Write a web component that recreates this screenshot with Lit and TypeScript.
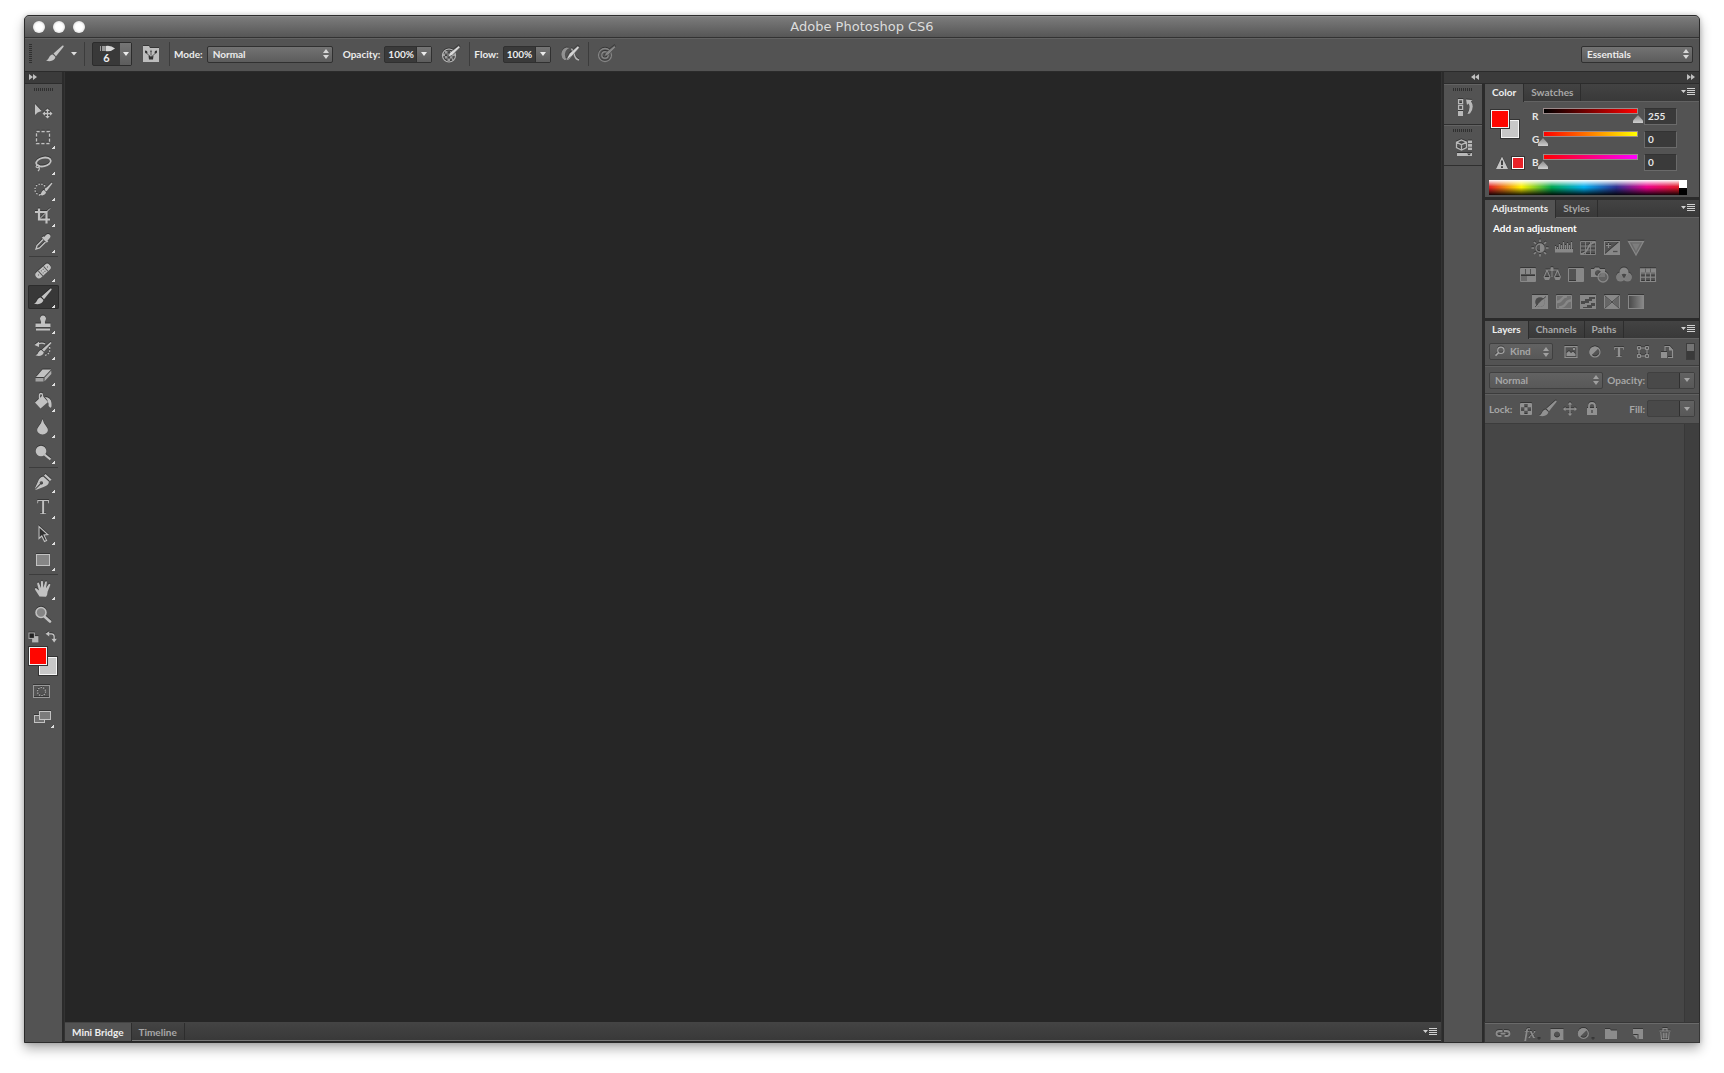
import { LitElement, html, css, svg, nothing, TemplateResult } from "lit";
import { customElement, state } from "lit/decorators.js";

type Shape = ReturnType<typeof svg>;

const brushShape = svg`<path fill="currentColor" d="M17.5 1.5 L8.5 9.6 L11 12.2 L18.6 2.8 Q18.9 1 17.5 1.5Z"/><path fill="currentColor" d="M7.8 10.4 L10.4 13 C9.8 17 5 18 1 16.4 C4.6 15.6 3.6 10.6 7.8 10.4Z"/>`;
const smallBrush = svg`<path fill="currentColor" d="M18.6 2.6 L11.6 9.4 L13.6 11.2 L19.4 3.6Z M11 10 L13 12 C12.4 15.4 9 15.8 6.4 14.6 C9 14 8 10.6 11 10Z"/>`;
const crossArrows = (x: number, y: number, r: number) => svg`<path stroke="currentColor" stroke-width="1.3" fill="none" d="M${x - r + 1} ${y}H${x + r - 1}M${x} ${y - r + 1}V${y + r - 1}"/><path fill="currentColor" d="M${x - r} ${y}l2.5-2.3v4.6zM${x + r} ${y}l-2.5-2.3v4.6zM${x} ${y - r}l-2.3 2.5h4.6zM${x} ${y + r}l-2.3-2.5h4.6z"/>`;

const icons: Record<string, Shape> = {
  move: svg`<path fill="currentColor" d="M2 2V13L4.6 10.5 L8.6 9Z"/>${crossArrows(14.5, 11.5, 5)}`,
  marquee: svg`<rect x="3.5" y="3.5" width="13" height="12" fill="none" stroke="currentColor" stroke-width="1.3" stroke-dasharray="3.2 1.8"/>`,
  lasso: svg`<ellipse cx="10.5" cy="8" rx="7.4" ry="4.3" transform="rotate(-12 10.5 8)" fill="none" stroke="currentColor" stroke-width="1.8"/><path fill="none" stroke="currentColor" stroke-width="1.2" d="M5 11c-2.4 0-2.6 3 0 2.6s1.6-2.7 0-2.6M5.5 13.5q2 1-.5 3.5"/>`,
  quick: svg`<circle cx="7.5" cy="9.5" r="5.5" fill="none" stroke="currentColor" stroke-width="1.3" stroke-dasharray="1.4 1.5"/>${smallBrush}`,
  crop: svg`<path fill="none" stroke="currentColor" stroke-width="2.2" d="M6 2.5V13.5H17M2 6H13.5V17.5"/><path stroke="currentColor" d="M6.5 13L17 2.5"/>`,
  eyedropper: svg`<path fill="currentColor" d="M12.5 3.5q2.5-2.5 4.3-.8t-.8 4.3l-1.5 1.5.8.8-1.5 1.5-5-5 1.5-1.5.8.8z"/><path fill="none" stroke="currentColor" stroke-width="1.4" d="M10 7.5L4 13.5L3 17L6.5 16L12.5 10"/>`,
  heal: svg`<g transform="rotate(-42 10 10)"><rect x="1" y="6.6" width="18" height="7" rx="3.3" fill="currentColor"/><path stroke="#555" d="M6.5 7V13.5M13.5 7V13.5"/><path fill="#555" d="M8.3 8.3h1v1h-1zM10.8 8.3h1v1h-1zM8.3 11h1v1h-1zM10.8 11h1v1h-1zM3.5 9.5h1v1h-1zM15.5 9.5h1v1h-1z"/></g>`,
  brush: brushShape,
  stamp: svg`<path fill="currentColor" d="M10 2.5a3 3 0 0 1 2.7 4.3q-1.2 1.700-.7 3.700h5.500v3.500H2.500v-3.500h5.500q.5-2-.7-3.700A3 3 0 0 1 10 2.500zM3 15.500h14v2H3z"/>`,
  history: svg`<path fill="none" stroke="currentColor" stroke-width="1.4" d="M4 5.5Q9 3 12 5"/><path fill="currentColor" d="M1.5 6l4.500-3.500v5.500zM17.500 3L9 10.500l2 2L18.500 4zM8.300 11l2.500 2.300C10 17 6 17.500 2.500 16.300 5.500 15.500 5 11.500 8.300 11z"/><path fill="none" stroke="currentColor" stroke-width="1.3" stroke-dasharray="1.5 1.5" d="M16.5 8q1.5 7-5 8.5"/>`,
  eraser: svg`<path fill="currentColor" d="M9.5 4.5H18L11 12H3z"/><path fill="currentColor" opacity=".75" d="M2.5 13H10.5V16.5H2.5z"/><path fill="currentColor" opacity=".85" d="M11.5 12.7L18.3 5.5V9L11.5 16.3z"/>`,
  bucket: svg`<path fill="currentColor" d="M9.5 4.5L15 11L7.5 17.5L2 11.5z"/><path fill="none" stroke="currentColor" stroke-width="1.3" d="M6.5 9V4.2q0-1.7 1.5-1.7T9.5 4.2V8"/><path fill="currentColor" d="M12 6q6 .5 6.500 6t-1.500 4.500-1.500-4Q15 9 12 6z"/>`,
  blur: svg`<path fill="currentColor" d="M9.5 2Q10.5 6.5 13.7 10Q16 13 13.9 15.6Q12 17.6 9.5 17.6T5.1 15.6Q3 13 5.3 10Q8.5 6.5 9.5 2z"/>`,
  dodge: svg`<circle cx="8" cy="8" r="5.3" fill="currentColor"/><path stroke="currentColor" stroke-width="2.2" d="M11.5 11.5L17.5 16.5"/>`,
  pen: svg`<path fill="currentColor" fill-rule="evenodd" d="M12.5 2L18.5 7.5L17 9L11 3.5zM10.3 4.5L16 9.8Q15.5 13.5 10.5 15L4 17.5L2 18L7.8 12.3a1.6 1.6 0 1 0-.8-.8L1.8 17L2.5 15L5.2 9Q6.5 5 10.3 4.5z"/>`,
  type: svg`<text x="10" y="16" text-anchor="middle" font-family="Liberation Serif, serif" font-weight="400" font-size="20" fill="currentColor">T</text>`,
  path: svg`<path fill="#303030" stroke="currentColor" stroke-width="1.1" d="M6 2.5V14.5L8.8 12L11.5 17.5L13.6 16.5L11 11L14.8 10.6z"/>`,
  rect: svg`<rect x="3.5" y="4.5" width="13" height="11" fill="#868686" stroke="currentColor"/>`,
  hand: svg`<path fill="currentColor" d="M6.5 17.5L2 10.5Q1.5 9 3 9L6 11.5L4.2 5Q4 3.8 5 3.6T6.2 4.5L8 9L8 2.8Q8.1 1.8 9 1.8T9.9 2.8L10.4 8.8L12.1 3Q12.4 2.2 13.2 2.3T13.9 3.4L13 9.3L15.6 5.3Q16.2 4.6 16.9 5T17.2 6.2L14.7 12.5Q14.5 16 13 17.8z"/>`,
  zoom: svg`<circle cx="8" cy="7.5" r="5" fill="#858585" stroke="currentColor" stroke-width="1.6"/><path stroke="currentColor" stroke-width="2.6" stroke-linecap="round" d="M12 12L17 16.5"/>`,
  mask: svg`<rect x="1.5" y="4.5" width="16" height="12" fill="none" stroke="#999"/><circle cx="9.5" cy="10.5" r="4" fill="none" stroke="#b4b4b4" stroke-width="1.2" stroke-dasharray="1.2 1.3"/>`,
  screen: svg`<rect x="2.5" y="8.5" width="10" height="7" fill="#707070" stroke="currentColor"/><rect x="7.5" y="4.5" width="11" height="8" fill="#7a7a7a" stroke="currentColor"/>`,
  reset: svg`<rect x="9" y="9" width="7" height="7" fill="#b5b5b5"/><rect x="5.5" y="5.5" width="6" height="6" fill="#222" stroke="#bbb"/>`,
  swap: svg`<path fill="none" stroke="currentColor" stroke-width="1.5" d="M7 6.5h3.5q3 0 3 3v3"/><path fill="currentColor" d="M4 6.5l4-3v6zM13.5 16l-3-4h6z"/>`,
  folder: svg`<path fill="#bdbdbd" d="M2 2h6l1 2h9V18H2z"/><path fill="none" stroke="#3a3a3a" stroke-width=".8" d="M8 11.5L5.500 9M10 11V8M12 11.500L14.500 9"/><path fill="#333" d="M4 6.500l2 .5.500 2-1.500.500-1-1zM9.200 8l.8-2.500.8 2.500zM16 6.500l-2 .5-.5 2 1.500.500 1-1zM7.500 11.500h1.500v1h.7v-1h.8v1h.8v-1h1.200L12 15.500H8z"/>`,
  opacityPen: svg`<circle cx="8" cy="11.5" r="6.5" fill="none" stroke="currentColor" stroke-width="1.2"/><path fill="currentColor" opacity=".8" d="M4 7h2.5v2.5H4zM9 7h2v2.5H9zM6.5 9.5H9V12H6.5zM2 9.5h2V12H2zM11 9.5h3V12h-3zM4 12h2.5v2.5H4zM9 12h2.5v2.5H9zM6.5 14.5H9V17H6.5zM11 14.5h1.5V16H11z"/><path fill="#dadada" stroke="#444" stroke-width=".6" d="M18 1.5L8.5 9L7 13L11 11.5L19 3.5z"/>`,
  airbrush: svg`<path fill="currentColor" opacity=".7" d="M6.5 3.500A7 7 0 0 0 4.500 16H7.500A7 7 0 0 1 9.500 4z"/><path fill="none" stroke="currentColor" stroke-width="1.500" d="M11.500 4.500L14 9.500Q15 15 19 16M6.500 15.500Q11 14 12.500 8"/><path fill="#d4d4d4" stroke="#444" stroke-width=".5" d="M18 1.800L9.500 9.500L6 16L12 12L19.300 3.800z"/>`,
  target: svg`<circle cx="8" cy="11" r="6.5" fill="none" stroke="currentColor" stroke-width="1.3"/><circle cx="8" cy="11" r="3.2" fill="none" stroke="currentColor" stroke-width="1.4"/><path fill="currentColor" stroke="#4b4b4b" stroke-width=".6" d="M17.5 1.5L9 8.5L7 12.5L11 11L18.5 3.5z"/>`,
  historyPanel: svg`<path fill="none" stroke="currentColor" stroke-width="1.3" d="M3.6 2.6h4v4h-4zM3.6 8.4h4v4h-4z"/><path fill="currentColor" d="M3 14h5v5H3zM11 2.5l6.5.5-1.5 1.3Q20 10 15 16.5l-2.5.5Q16 10 13.5 6.5L12 8z"/>`,
  propsPanel: svg`<path fill="none" stroke="currentColor" stroke-width="1.3" d="M6.5 2l5 2.2v5.3L6.5 12 1.5 9.5V4.2zM1.5 4.2l5 2.500 5-2.500M6.500 6.700V12"/><path fill="currentColor" d="M13 2.5h4v2.7h-4zM13 6h4v2.7h-4zM13 9.5h4V12h-4zM2 15h15v3H2z"/><path fill="#333" d="M12 15.5h4l-2 2z"/>`,
  warning: svg`<path fill="#c4c4c4" d="M10 3.5L16 16H4z"/><path stroke="#333" stroke-width="1.8" d="M10 7.5V12M10 13.2V15"/>`,
  sun: svg`<circle cx="10" cy="10" r="4" fill="none" stroke="currentColor" stroke-width="1.3"/><path fill="currentColor" d="M10 6a4 4 0 0 1 0 8z"/><path stroke="currentColor" stroke-width="1.6" d="M10 1.5V4M10 16v2.5M1.5 10H4M16 10h2.5M4 4l1.8 1.8M14.2 14.2L16 16M4 16l1.8-1.8M14.2 5.8L16 4"/>`,
  levels: svg`<path fill="currentColor" d="M1 11h18v3.5H1z"/><path stroke="currentColor" stroke-width="1.2" d="M1.5 8v4M3.5 9v3M5.5 6v6M7.5 7v5M9.5 4v8M11.5 7v5M13.5 5v7M15.5 7v5M17.5 4v8"/>`,
  curves: svg`<path fill="none" stroke="currentColor" stroke-width=".9" d="M2.5 3.5h15v13h-15zM7.5 3.5v13M12.5 3.5v13M2.5 8h15M2.5 12h15"/><path fill="none" stroke="currentColor" stroke-width="1.8" d="M3 16Q8 15 10 10T17 4"/>`,
  exposure: svg`<rect x="2.5" y="3.5" width="15" height="13" fill="none" stroke="currentColor"/><path fill="currentColor" d="M17 4V16H3z"/><path stroke="currentColor" stroke-width="1.2" d="M4 7.5h5M6.5 5v5"/><path stroke="#505050" stroke-width="1.3" d="M11 13.5h4.5"/>`,
  vibrance: svg`<path fill="#6b6b6b" stroke="currentColor" stroke-width="1.3" d="M2.5 3.5h15L10 17z"/><path fill="currentColor" opacity=".6" d="M6 5.5h8L10 13z"/>`,
  hue: svg`<path fill="none" stroke="currentColor" d="M2.5 3.5h15v13h-15z"/><path fill="currentColor" d="M3 4h4v5H3zM8 4h4v5H8zM13 4h4v5h-4zM9 11h8v5H9z"/><path fill="#6b6b6b" d="M3 11h6v5H3z"/>`,
  balance: svg`<path fill="none" stroke="currentColor" stroke-width="1.2" d="M10 2v10M3.5 5h13M5 5L2 12M5 5l3 7M15.5 5l-3 7M15.5 5l3 7"/><path fill="currentColor" d="M8.5 2.5h3V6h-3zM1.5 12h7l-1.5 3H3zM12 12h7l-1.5 3H13.5z"/>`,
  bw: svg`<path fill="none" stroke="currentColor" d="M2.5 3.5h15v13h-15z"/><path fill="currentColor" d="M10 4h7v12h-7z"/>`,
  photo: svg`<path fill="currentColor" fill-rule="evenodd" d="M1 4h3l1-1.5h4L10 4h5v8H1zM8 5a3 3 0 1 0 .01 0z"/><circle cx="13" cy="12" r="5" fill="#707070" fill-opacity=".7" stroke="currentColor" stroke-width="1.3"/>`,
  mixer: svg`<circle cx="10" cy="7" r="4.5" fill="currentColor"/><circle cx="6.5" cy="12" r="4.5" fill="currentColor" opacity=".85"/><circle cx="13.5" cy="12" r="4.5" fill="currentColor" opacity=".85"/><path fill="#484848" d="M10 13.5L7.5 9.5q2.5-1.5 5 0z"/>`,
  lookup: svg`<path fill="currentColor" d="M2 3.5h16v4H2z"/><path fill="none" stroke="currentColor" stroke-width="1.2" d="M2.5 4h15v12.5h-15zM7.5 7v9.5M12.5 7v9.5M2.5 8h15M2.5 12.2h15"/><path stroke="#555" stroke-width=".8" d="M7.5 3.5v4M12.5 3.5v4"/>`,
  invert: svg`<rect x="2" y="3" width="16" height="14" fill="currentColor"/><circle cx="10" cy="10" r="4.8" fill="#4a4a4a"/><path fill="currentColor" d="M6.5 13.5L13.5 6.5A4.5 4.5 0 0 1 6.5 13.5z"/><path stroke="#4a4a4a" d="M5 15L8 12M12.5 7.5L16 4.5"/>`,
  poster: svg`<path fill="#707070" stroke="currentColor" d="M2.5 3.5h15v13h-15z"/><path fill="none" stroke="currentColor" stroke-width="2.5" d="M3 10Q6 10 8 7T13 4.5M5 15.5Q10 15 12 11.5T17.5 8.5"/>`,
  threshold: svg`<path fill="currentColor" d="M2 3h16v14H2z"/><path fill="#4a4a4a" d="M3 9h4V7h4V5h6v2h-3v2h-3v2H7v1H3zM5 15h4v-2h4v-2h4v3h-3v2H5z"/>`,
  selective: svg`<path fill="currentColor" d="M2 3h16v14H2z"/><path fill="#666" d="M3 4.5L9 10L3 15.5zM17 4.5L11 10L17 15.5z"/><path stroke="#4a4a4a" d="M2.5 3.5L17.5 16.5M2.5 16.5L17.5 3.5"/>`,
  gradient: svg`<defs><linearGradient id="gm"><stop offset="0" stop-color="#484848"/><stop offset="1" stop-color="#8a8a8a"/></linearGradient></defs><rect x="2.5" y="3.5" width="15" height="13" fill="url(#gm)" stroke="currentColor"/>`,
  image: svg`<path fill="none" stroke="currentColor" stroke-width="1.2" d="M4 4.6h12v10.800H4z"/><path fill="currentColor" d="M5.5 14v-3l2.5-2 2 2 2-1.5 2.5 2.5v2zM12 6h2v2h-2z"/>`,
  half: svg`<circle cx="10" cy="10" r="5" fill="none" stroke="currentColor" stroke-width="1.2"/><path fill="currentColor" d="M6 13.8A5.5 5.5 0 0 1 13.8 6z"/>`,
  filterType: svg`<text x="10" y="15" text-anchor="middle" font-family="Liberation Serif, serif" font-weight="700" font-size="15" fill="currentColor">T</text>`,
  shape: svg`<path fill="none" stroke="currentColor" stroke-width="1.2" d="M6 6h8v8H6z"/><path fill="#555" stroke="currentColor" d="M4.5 4.5h3v3h-3zM12.5 4.5h3v3h-3zM4.5 12.5h3v3h-3zM12.5 12.5h3v3h-3z"/>`,
  smart: svg`<path fill="none" stroke="currentColor" stroke-width="1.2" d="M8 9V4.5h4.5L15.5 8v7.5H11"/><path fill="currentColor" d="M12 4v4.5h4zM4 10h6v6H4z"/>`,
  search: svg`<circle cx="11" cy="8" r="3.5" fill="none" stroke="currentColor" stroke-width="1.3"/><path stroke="currentColor" stroke-width="1.8" d="M8.5 10.5L5 14"/>`,
  checker: svg`<path fill="none" stroke="currentColor" d="M4.5 4.5h11v11h-11z"/><path fill="currentColor" d="M5 5h3.3v3.3H5zM11.6 5H15v3.3h-3.4zM8.3 8.3h3.3v3.4H8.3zM5 11.7h3.3V15H5zM11.6 11.7H15V15h-3.4z"/>`,
  moveLock: crossArrows(10, 10, 7),
  lock: svg`<path fill="currentColor" d="M5 9h10v7H5z"/><path fill="none" stroke="currentColor" stroke-width="1.8" d="M7 9.5V7q0-3 3-3t3 3v2.5"/><path stroke="#505050" stroke-width="1.5" d="M10 11v3"/>`,
  link: svg`<path fill="none" stroke="currentColor" stroke-width="1.8" d="M9.5 7H6.5Q3.5 7 3.5 9.5T6.5 12H8.5M11.5 12h2Q16.5 12 16.5 9.5T13.5 7H11M7.5 9.5h5"/>`,
  fx: svg`<text x="10" y="14" text-anchor="middle" font-family="Liberation Serif, serif" font-style="italic" font-weight="bold" font-size="14" fill="currentColor">fx</text><path fill="#3a3a3a" d="M17 14h4l-2 2z"/>`,
  addMask: svg`<path fill="currentColor" fill-rule="evenodd" d="M3.5 5h13v11h-13zM10 7.5a3 3 0 1 0 .01 0z"/>`,
  adjLayer: svg`<circle cx="9.5" cy="9.5" r="4.8" fill="none" stroke="currentColor" stroke-width="1.3"/><path fill="currentColor" d="M5.5 13.3A5.5 5.5 0 0 1 13.3 5.5z"/><path fill="#3a3a3a" d="M17 14h4l-2 2z"/>`,
  group: svg`<path fill="currentColor" d="M4 5h5l1 1.5h6V15H4z"/>`,
  newLayer: svg`<path fill="currentColor" d="M5 5h10v10h-4.5V10H5z"/><path fill="currentColor" d="M5 11h4.5v4.5z"/>`,
  trash: svg`<path fill="none" stroke="currentColor" stroke-width="1.2" d="M4.5 7h11M8 6.5V4.6h4v1.900M5.800 8l.7 7.500h7L14.200 8M8.300 8.500v6M10 8.500v6M11.700 8.500v6"/>`,
};

const icon = (name: string, size = 20) =>
  html`<svg class="icon" width=${size} height=${size} viewBox="0 0 20 20" aria-hidden="true">${icons[name]}</svg>`;

const updown = html`<svg class="updown" width="6" height="10" viewBox="0 0 6 10" aria-hidden="true"><path fill="currentColor" d="M3 0L6 4H0zM3 10L0 6H6z"/></svg>`;
const down = html`<svg width="6" height="4" viewBox="0 0 6 4" aria-hidden="true"><path fill="currentColor" d="M0 0H6L3 4z"/></svg>`;
const chevrons = (left: boolean) =>
  html`<svg width="8" height="6" viewBox="0 0 8 6" aria-hidden="true"><path fill="currentColor" d=${left ? "M4 0V6L0 3zM8 0V6L4 3z" : "M0 0L4 3L0 6zM4 0L8 3L4 6z"}/></svg>`;

const toolGroups: [string, string, boolean][][] = [
  [
    ["move", "Move", false],
    ["marquee", "Rectangular Marquee", true],
    ["lasso", "Lasso", true],
    ["quick", "Quick Selection", true],
    ["crop", "Crop", true],
    ["eyedropper", "Eyedropper", true],
  ],
  [
    ["heal", "Spot Healing Brush", true],
    ["brush", "Brush", true],
    ["stamp", "Clone Stamp", true],
    ["history", "History Brush", true],
    ["eraser", "Eraser", true],
    ["bucket", "Paint Bucket", true],
    ["blur", "Blur", true],
    ["dodge", "Dodge", true],
  ],
  [
    ["pen", "Pen", true],
    ["type", "Horizontal Type", true],
    ["path", "Path Selection", true],
    ["rect", "Rectangle", true],
  ],
  [
    ["hand", "Hand", true],
    ["zoom", "Zoom", false],
  ],
];

const adjustments = [
  ["sun", "levels", "curves", "exposure", "vibrance"],
  ["hue", "balance", "bw", "photo", "mixer", "lookup"],
  ["invert", "poster", "threshold", "selective", "gradient"],
];

@customElement("app-root")
export class AppRoot extends LitElement {
  @state() private tool = "brush";
  @state() private rgb = [255, 0, 0];

  static styles = css`
    :host {
      display: flex;
      box-sizing: border-box;
      min-height: 100vh;
      padding: 15px 24px 30px;
      background: #fff;
      color: #e6e6e6;
      font: 700 10px/14px Lato, "Open Sans", sans-serif;
    }
    * { box-sizing: border-box; }
    button, select, input { font: inherit; color: inherit; margin: 0; border-radius: 0; }
    button { padding: 0; border: 0; background: none; display: grid; place-items: center; }
    svg { display: block; flex: none; overflow: visible; }
    .icon { filter: drop-shadow(0 -1px 0 rgba(0, 0, 0, 0.35)); }
    .window {
      flex: 1;
      min-width: 0;
      display: flex;
      flex-direction: column;
      border: 1px solid #2b2b2b;
      border-radius: 5px 5px 0 0;
      background: #2b2b2b;
      box-shadow: 0 6px 12px rgba(0, 0, 0, 0.3), 0 0 5px rgba(0, 0, 0, 0.2);
    }
    .titlebar {
      height: 22px;
      display: grid;
      grid-template-columns: 1fr auto 1fr;
      align-items: center;
      border-radius: 4px 4px 0 0;
      background: linear-gradient(#7b7b7b, #565656);
      border-top: 1px solid #8a8a8a;
      border-bottom: 1px solid #333;
      color: #dcdcdc;
    }
    .titlebar h1 { margin: 0; font: 400 13px/20px "DejaVu Sans", sans-serif; }
    .lights { display: flex; gap: 8px; padding-left: 8px; }
    .lights button { width: 12px; height: 12px; border-radius: 50%; background: radial-gradient(#fff 40%, #c8c8c8); }
    .options {
      height: 33px;
      display: flex;
      align-items: center;
      background: #535353;
      border-top: 1px solid #626262;
      padding: 0 6px 2px 4px;
      color: #ececec;
    }
    .vgrip { width: 3px; height: 20px; background: repeating-linear-gradient(#2f2f2f 0 1px, #535353 1px 2px); }
    .vsep { width: 1px; height: 24px; background: #3c3c3c; }
    .vsep.after { margin: 0 4px 0 8px; }
    .toggleIcon { color: #b4b4b4; margin-left: 9px; }
    .toggleIcon.dim { color: #858585; margin-left: 4px; }
    .presets { color: #c4c4c4; }
    .brushTool { margin: 0 7px 0 13px; color: #c4c4c4; }
    .picker { display: flex; width: 40px; height: 24px; margin: 0 9px 0 7px; border: 1px solid #2c2c2c; border-radius: 2px; background: #393939; }
    .picker .tip { flex: 1; display: grid; justify-items: center; align-content: center; line-height: 12px; color: #eee; font-size: 11px; }
    .picker .drop { width: 11px; }
    .drop { display: grid; place-items: center; background: linear-gradient(#757575, #5d5d5d); }
    .field { display: flex; align-items: center; gap: 4px; }
    .opacityField { margin-left: 10px; }
    .select { display: grid; }
    .select select {
      grid-area: 1 / 1;
      appearance: none;
      width: 100%;
      height: 17px;
      padding: 0 16px 0 5px;
      border: 1px solid #303030;
      border-radius: 2px;
      background: linear-gradient(#737373, #5c5c5c);
      line-height: 14px;
      outline: none;
    }
    .select .updown { grid-area: 1 / 1; place-self: center end; margin-right: 4px; pointer-events: none; color: #d8d8d8; }
    .combo { display: flex; width: 48px; height: 17px; border: 1px solid #303030; border-radius: 2px; background: #3a3a3a; }
    .combo input { width: 31px; min-width: 0; border: 0; padding: 0 0 0 3px; background: none; outline: none; }
    .combo .drop { flex: 1; border-left: 1px solid #303030; }
    .modeSelect { width: 126px; }
    .workspaceSelect { width: 112px; margin-left: auto; }
    .main { flex: 1; display: flex; gap: 2px; border-top: 1px solid #2b2b2b; }
    .tools { width: 37px; display: flex; flex-direction: column; background: #535353; color: #c2c2c2; }
    .strip {
      height: 12px;
      display: flex;
      align-items: center;
      justify-content: space-between;
      padding: 0 4px 1px;
      background: #3b3b3b;
      color: #c0c0c0;
      border-bottom: 1px solid #2c2c2c;
    }
    .hgrip { width: 20px; height: 3px; margin: 4px auto 8px; background: repeating-linear-gradient(90deg, #2f2f2f 0 1px, #535353 1px 2px); }
    .toolGroup { display: grid; justify-content: center; }
    .toolGroup + .toolGroup { border-top: 1px solid #3c3c3c; margin: 1px 4px 0; padding-top: 1px; }
    .tool { position: relative; width: 31px; height: 24px; margin: 1px 0; padding-right: 1px; border-radius: 2px; }
    .tool.on { background: #383838; box-shadow: inset 0 0 0 1px #2c2c2c; }
    .tool.more::after {
      content: "";
      position: absolute;
      right: 4px;
      bottom: 1px;
      width: 3px;
      height: 3px;
      background: linear-gradient(135deg, transparent 40%, #e0e0e0 45%);
    }
    .mini { display: flex; justify-content: space-between; align-items: start; padding-right: 2px; height: 18px; }
    .mini button { height: 14px; margin-left: -1px; align-items: end; }
    .chips { position: relative; width: 30px; height: 30px; }
    .chip { position: absolute; display: block; border: 1px solid #f4f4f4; outline: 1px solid #333; }
    .chip.fg { left: 1px; top: 1px; width: 18px; height: 18px; background: #ff0600; }
    .chip.bg { right: 1px; bottom: 1px; width: 18px; height: 18px; background: #c8c8c8; }
    .tools .chips { margin: 0 0 2px 3px; }
    .modes { display: grid; padding-left: 2px; }
    .document { flex: 1; min-width: 0; display: flex; flex-direction: column; border: solid #333; border-width: 0 1px; background: #262626; }
    .canvas { flex: 1; }
    .tabs { display: flex; height: 18px; background: linear-gradient(#434343, #393939); border-bottom: 1px solid #626262; }
    .tabs button { padding: 0 7px 2px; height: 17px; color: #a8a8a8; border-right: 1px solid #2d2d2d; }
    .tabs button.on { height: 18px; padding-bottom: 3px; background: #535353; color: #eee; }
    .tabs .menu { margin-left: auto; border: 0; padding: 0 4px 1px; color: #d0d0d0; }
    .document .tabs { border-top: 1px solid #444; border-bottom: 1px solid #777; height: 19px; margin-bottom: 1px; }
    .document .tabs button { padding-bottom: 0; }
    .side { display: flex; flex-direction: column; }
    .sideStrip { display: grid; grid-template-columns: 31px 1fr; justify-items: end; }
    .sideBody { flex: 1; display: flex; gap: 3px; }
    .dock { width: 38px; background: #535353; color: #b8b8b8; }
    .dockItem { height: 41px; border-bottom: 1px solid #2f2f2f; overflow: hidden; border-top: 1px solid #636363; }
    .dockItem button { width: 100%; padding-left: 4px; }
    .dockItem .hgrip { margin: 3px 0 6px 9px; }
    .panels { width: 214px; display: flex; flex-direction: column; gap: 3px; }
    .panel { background: #535353; }
    .colorGrid {
      display: grid;
      grid-template-columns: 42px 6px 1fr 33px;
      grid-auto-rows: 17px;
      row-gap: 6px;
      padding: 6px 22px 9px 5px;
    }
    .colorGrid .chips { grid-area: 1 / 1 / 3 / 2; margin-top: 1px; }
    .colorGrid .gamut { grid-area: 3 / 1; display: flex; align-items: center; }
    .gamutChip { width: 12px; height: 12px; background: #e82228; border: 1px solid #fff; outline: 1px solid #333; }
    .gamut .icon { margin-left: 2px; }
    .colorGrid label { grid-column: 2; align-self: center; padding-bottom: 1px; }
    .slider { grid-column: 3; display: grid; margin-right: 1px; }
    .track { grid-area: 1 / 1; height: 6px; margin: 0 5px; border: 1px solid #9a8a8a; }
    .track.r { background: linear-gradient(90deg, #000, #f00); }
    .track.g { background: linear-gradient(90deg, #f00, #ff0); }
    .track.b { background: linear-gradient(90deg, #f00, #f0f); }
    .slider input { grid-area: 1 / 1; appearance: none; width: 100%; min-width: 0; height: 17px; background: none; outline: none; }
    .slider input::-webkit-slider-thumb {
      appearance: none;
      width: 10px;
      height: 8px;
      margin-top: 5px;
      background: linear-gradient(#888, #cfcfcf);
      clip-path: polygon(50% 0, 100% 70%, 100% 100%, 0 100%, 0 70%);
    }
    .num { width: 33px; height: 17px; padding: 0 3px 1px; background: #3a3a3a; border: 1px solid #6a6a6a; border-top-color: #333; outline: none; }
    .spectrum { display: flex; height: 15px; margin: 0 12px 2px 4px; }
    .spectrum .ramp {
      flex: 1;
      background:
        linear-gradient(#fff, rgba(255, 255, 255, 0) 45%, rgba(0, 0, 0, 0) 50%, rgba(0, 0, 0, 0.9)),
        linear-gradient(90deg, #e01a22, #fff200 17%, #00a651 33%, #00aeef 50%, #2e3192 67%, #ec008c 83%, #e01a22);
    }
    .spectrum .ends { width: 8px; background: linear-gradient(#fff 50%, #000 50%); }
    .adjust { padding: 4px 8px 3px; height: 100px; }
    .adjust h2 { margin: 0; font: inherit; line-height: 12px; color: #fff; }
    .adjustRow { display: flex; justify-content: center; height: 27px; gap: 4px; padding-right: 8px; color: #888; }
    .layers { flex: 1; display: flex; flex-direction: column; }
    .row { display: flex; align-items: center; height: 28px; padding: 0 4px; border-bottom: 1px solid #3c3c3c; border-top: 1px solid #606060; color: #a6a6a6; }
    .row .select select, .row .combo { border-color: #404040; }
    .row .select select, .row .drop { background: linear-gradient(#626262, #585858); }
    .row .combo { background: #494949; margin-left: 2px; }
    .row .updown { color: #a0a0a0; }
    .row.first { border-top: 0; height: 27px; padding-bottom: 1px; }
    .row.last { height: 30px; padding-bottom: 1px; }
    .kind { width: 64px; }
    .kind .icon { grid-area: 1 / 1; z-index: 1; align-self: center; margin-left: 2px; pointer-events: none; }
    .kind select { padding-left: 20px; padding-right: 0; }
    .filters { display: flex; gap: 4px; margin-left: 8px; color: #919191; }
    .toggle { width: 9px; height: 17px; margin-left: auto; background: linear-gradient(#747474 45%, #3a3a3a 50%); border: 1px solid #3d3d3d; }
    .blend { width: 114px; }
    .push { margin-left: auto; }
    .locks { display: flex; gap: 2px; margin-left: 4px; color: #919191; }
    .list { flex: 1; display: flex; background: #464646; }
    .scroll { margin-left: auto; width: 15px; background: #3f3f3f; border-left: 1px solid #383838; }
    .foot { display: flex; gap: 7px; height: 19px; padding-left: 8px; border-top: 1px solid #6a6a6a; outline: 1px solid #363636; color: #8c8c8c; background: #535353; }
  `;

  private tabs(names: string[]): TemplateResult {
    return html`<div class="tabs" role="tablist">
      ${names.map((n, i) => html`<button role="tab" aria-selected=${i === 0} class=${i === 0 ? "on" : ""}>${n}</button>`)}
      <button class="menu" aria-label="Panel menu"><svg width="14" height="8" viewBox="0 0 14 8"><path fill="currentColor" d="M0 2h5L2.5 5zM6 0h8v1H6zM6 2h8v1H6zM6 4h8v1H6zM6 6h8v1H6z"/></svg></button>
    </div>`;
  }

  private select(value: string, cls: string, label: string, id: string, lead: unknown = nothing) {
    return html`<span class="select ${cls}">${lead}<select id=${id} aria-label=${label}><option>${value}</option></select>${updown}</span>`;
  }

  private combo(id: string, value: string, label: string) {
    return html`<span class="combo"><input id=${id} .value=${value}><button class="drop" aria-label="${label} slider">${down}</button></span>`;
  }

  private setChannel(i: number, v: string) {
    this.rgb = this.rgb.map((c, n) => (n === i ? Math.min(255, Math.max(0, Number(v) || 0)) : c));
  }

  private channel(name: string, i: number) {
    const key = name.toLowerCase();
    return html`<label for="ch-${key}">${name}</label>
      <span class="slider"><span class="track ${key}"></span><input type="range" min="0" max="255" aria-label="${name} slider" .value=${String(this.rgb[i])} @input=${(e: Event) => this.setChannel(i, (e.target as HTMLInputElement).value)}></span>
      <input class="num" id="ch-${key}" .value=${String(this.rgb[i])} @change=${(e: Event) => this.setChannel(i, (e.target as HTMLInputElement).value)}>`;
  }

  private chips() {
    return html`<div class="chips"><button class="chip bg" aria-label="Background color"></button><button class="chip fg" aria-label="Foreground color"></button></div>`;
  }

  render() {
    return html`<div class="window">
      <header class="titlebar">
        <div class="lights"><button aria-label="Close"></button><button aria-label="Minimize"></button><button aria-label="Zoom window"></button></div>
        <h1>Adobe Photoshop CS6</h1>
      </header>
      <div class="options" role="toolbar" aria-label="Tool options">
        <span class="vgrip"></span>
        <button class="brushTool" aria-label="Tool preset"><svg width="32" height="20" viewBox="0 0 32 20">${brushShape}<path fill="#ddd" d="M26 8H32L29 11.5z"/></svg></button>
        <span class="vsep"></span>
        <span class="picker"><span class="tip"><svg width="16" height="7" viewBox="0 0 16 7"><path fill="#999" d="M1 1h1v5H1zM3 1h3v5H3z"/><path fill="#d8d8d8" d="M6.5 1Q12 0 16 3.5Q12 7 6.5 6z"/></svg>6</span><button class="drop" aria-label="Brush preset picker">${down}</button></span>
        <button class="presets" aria-label="Brush panel">${icon("folder")}</button>
        <span class="vsep after"></span>
        <span class="field"><label for="mode">Mode:</label>${this.select("Normal", "modeSelect", "Mode", "mode")}</span>
        <span class="field opacityField"><label for="opacity">Opacity:</label>${this.combo("opacity", "100%", "Opacity")}</span>
        <button class="toggleIcon" aria-label="Pressure for opacity">${icon("opacityPen")}</button>
        <span class="vsep after"></span>
        <span class="field"><label for="flow">Flow:</label>${this.combo("flow", "100%", "Flow")}</span>
        <button class="toggleIcon" aria-label="Airbrush">${icon("airbrush")}</button>
        <span class="vsep after"></span>
        <button class="toggleIcon dim" aria-label="Pressure for size">${icon("target")}</button>
        ${this.select("Essentials", "workspaceSelect", "Workspace", "workspace")}
      </div>
      <div class="main">
        <nav class="tools" aria-label="Tools">
          <div class="strip"><button aria-label="Expand tools">${chevrons(false)}</button></div>
          <span class="hgrip"></span>
          ${toolGroups.map((g) => html`<div class="toolGroup">${g.map(([id, label, more]) => html`<button class="tool ${more ? "more" : ""} ${this.tool === id ? "on" : ""}" aria-label=${label} @click=${() => (this.tool = id)}>${icon(id)}</button>`)}</div>`)}
          <div class="mini"><button aria-label="Default colors">${icon("reset", 18)}</button><button aria-label="Swap colors">${icon("swap", 18)}</button></div>
          ${this.chips()}
          <div class="modes"><button class="tool" aria-label="Quick mask">${icon("mask")}</button><button class="tool more" aria-label="Screen mode">${icon("screen")}</button></div>
        </nav>
        <main class="document"><div class="canvas"></div>${this.tabs(["Mini Bridge", "Timeline"])}</main>
        <aside class="side">
          <div class="strip sideStrip"><button aria-label="Expand dock">${chevrons(true)}</button><button aria-label="Collapse panels">${chevrons(false)}</button></div>
          <div class="sideBody">
            <div class="dock">
              <div class="dockItem"><div class="hgrip"></div><button aria-label="History">${icon("historyPanel")}</button></div>
              <div class="dockItem"><div class="hgrip"></div><button aria-label="Properties">${icon("propsPanel")}</button></div>
            </div>
            <div class="panels">
              <section class="panel">
                ${this.tabs(["Color", "Swatches"])}
                <div class="colorGrid">
                  ${this.chips()}
                  <div class="gamut">${icon("warning")}<button class="gamutChip" aria-label="Nearest printable color"></button></div>
                  ${this.channel("R", 0)}${this.channel("G", 1)}${this.channel("B", 2)}
                </div>
                <div class="spectrum"><div class="ramp"></div><div class="ends"></div></div>
              </section>
              <section class="panel">
                ${this.tabs(["Adjustments", "Styles"])}
                <div class="adjust"><h2>Add an adjustment</h2>
                  ${adjustments.map((r) => html`<div class="adjustRow">${r.map((a) => html`<button aria-label="${a} adjustment">${icon(a)}</button>`)}</div>`)}
                </div>
              </section>
              <section class="panel layers">
                ${this.tabs(["Layers", "Channels", "Paths"])}
                <div class="row first">${this.select("Kind", "kind", "Filter kind", "kind", icon("search", 18))}
                  <div class="filters">${["image", "half", "filterType", "shape", "smart"].map((f) => html`<button aria-label="Filter ${f}">${icon(f)}</button>`)}</div>
                  <button class="toggle" aria-label="Toggle filter"></button></div>
                <div class="row">${this.select("Normal", "blend", "Blend mode", "blend")}<label class="push" for="lo">Opacity:</label>${this.combo("lo", "", "Layer opacity")}</div>
                <div class="row last">Lock:<div class="locks">${["checker", "brush", "moveLock", "lock"].map((f) => html`<button aria-label="Lock ${f}">${icon(f)}</button>`)}</div><label class="push" for="fill">Fill:</label>${this.combo("fill", "", "Fill")}</div>
                <div class="list"><div class="scroll"></div></div>
                <div class="foot">${["link", "fx", "addMask", "adjLayer", "group", "newLayer", "trash"].map((f) => html`<button aria-label=${f}>${icon(f)}</button>`)}</div>
              </section>
            </div>
          </div>
        </aside>
      </div>
    </div>`;
  }
}
